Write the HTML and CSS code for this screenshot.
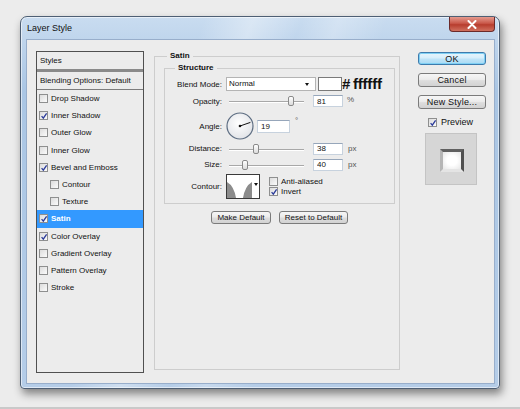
FILE: index.html
```html
<!DOCTYPE html>
<html lang="en">
<head>
    <meta charset="UTF-8">
    <title>Layer Style</title>
    <link rel="stylesheet" href="styles.css">
</head>
<body>

<div class="desk">
    <div class="window">
        <div class="titlebar">
            <span class="title">Layer Style</span>
            <button class="close">
                <svg width="10" height="9" viewBox="0 0 10 9"><path d="M1.5 1 L8.5 8 M8.5 1 L1.5 8" stroke="#fff" stroke-width="2" stroke-linecap="round"/></svg>
            </button>
        </div>

        <div class="client">
            <!-- effect list -->
            <div class="styles-list">
                <div class="list-head">Styles</div>
                <div class="list-blend">Blending Options: Default</div>
                <div class="item"><span class="cb"></span>Drop Shadow</div>
                <div class="item"><span class="cb on"><svg viewBox="0 0 8 8"><path d="M1.6 4.2 L3.3 6.2 L6.6 1.4"/></svg></span>Inner Shadow</div>
                <div class="item"><span class="cb"></span>Outer Glow</div>
                <div class="item"><span class="cb"></span>Inner Glow</div>
                <div class="item"><span class="cb on"><svg viewBox="0 0 8 8"><path d="M1.6 4.2 L3.3 6.2 L6.6 1.4"/></svg></span>Bevel and Emboss</div>
                <div class="item sub"><span class="cb"></span>Contour</div>
                <div class="item sub"><span class="cb"></span>Texture</div>
                <div class="item selected"><span class="cb on"><svg viewBox="0 0 8 8"><path d="M1.6 4.2 L3.3 6.2 L6.6 1.4"/></svg></span>Satin</div>
                <div class="item"><span class="cb on"><svg viewBox="0 0 8 8"><path d="M1.6 4.2 L3.3 6.2 L6.6 1.4"/></svg></span>Color Overlay</div>
                <div class="item"><span class="cb"></span>Gradient Overlay</div>
                <div class="item"><span class="cb"></span>Pattern Overlay</div>
                <div class="item"><span class="cb"></span>Stroke</div>
            </div>

            <!-- satin settings -->
            <fieldset class="group">
                <legend>Satin</legend>
                <fieldset class="group inner">
                    <legend>Structure</legend>

                    <div class="row row-blend">
                        <label>Blend Mode:</label>
                        <div class="select">Normal<span class="arrow"></span></div>
                        <div class="swatch"></div>
                        <span class="hex">#&thinsp;ffffff</span>
                    </div>

                    <div class="row row-opacity">
                        <label>Opacity:</label>
                        <div class="slider"><span class="thumb" style="left: 62px"></span></div>
                        <input class="num" type="text" value="81">
                        <span class="unit">%</span>
                    </div>

                    <div class="row row-angle">
                        <label>Angle:</label>
                        <svg class="dial" width="28" height="28" viewBox="0 0 28 28">
                            <defs>
                                <radialGradient id="dialFill" cx="0.45" cy="0.4" r="0.6">
                                    <stop offset="0" stop-color="#ffffff"/>
                                    <stop offset="1" stop-color="#e2e4e8"/>
                                </radialGradient>
                            </defs>
                            <circle cx="14" cy="14" r="13" fill="url(#dialFill)" stroke="#5d6d82" stroke-width="1.2"/>
                            <line x1="14" y1="14" x2="24.4" y2="10.4" stroke="#111" stroke-width="1"/>
                            <circle cx="14" cy="14" r="1.3" fill="#111"/>
                        </svg>
                        <input class="num wide" type="text" value="19">
                        <span class="unit deg">°</span>
                    </div>

                    <div class="row row-distance">
                        <label>Distance:</label>
                        <div class="slider"><span class="thumb" style="left: 27px"></span></div>
                        <input class="num" type="text" value="38">
                        <span class="unit">px</span>
                    </div>

                    <div class="row row-size">
                        <label>Size:</label>
                        <div class="slider"><span class="thumb" style="left: 16px"></span></div>
                        <input class="num" type="text" value="40">
                        <span class="unit">px</span>
                    </div>

                    <div class="row row-contour">
                        <label>Contour:</label>
                        <div class="contour">
                            <svg width="25" height="23" viewBox="0 0 25 23">
                                <rect width="25" height="23" fill="#8c8c8c"/>
                                <path d="M0 0 H25 V7 Q18 11 16 23 H9 Q7 11 0 7 Z" fill="#fff"/>
                            </svg>
                            <span class="contour-arrow"></span>
                        </div>
                        <div class="checks">
                            <div class="check"><span class="cb"></span>Anti-aliased</div>
                            <div class="check"><span class="cb on"><svg viewBox="0 0 8 8"><path d="M1.6 4.2 L3.3 6.2 L6.6 1.4"/></svg></span>Invert</div>
                        </div>
                    </div>
                </fieldset>

                <div class="defaults">
                    <button class="btn">Make Default</button>
                    <button class="btn">Reset to Default</button>
                </div>
            </fieldset>

            <!-- dialog buttons -->
            <div class="actions">
                <button class="btn big primary">OK</button>
                <button class="btn big">Cancel</button>
                <button class="btn big">New Style...</button>
                <div class="preview-check"><span class="cb on"><svg viewBox="0 0 8 8"><path d="M1.6 4.2 L3.3 6.2 L6.6 1.4"/></svg></span>Preview</div>
                <div class="preview">
                    <div class="preview-tile"></div>
                </div>
            </div>
        </div>
    </div>
</div>

</body>
</html>
```

FILE: styles.css
```css
body {
    margin: 0;
    background-color: #ececec;
    font-family: "Liberation Sans", Arial, sans-serif;
    font-size: 8px;
    color: #111;
    overflow: hidden;
}

.desk {
    height: 391px;
    padding: 16px 20px 0;
    border-bottom: 2px solid #c9c9c9;
}

/* window frame */
.window {
    width: 478px;
    height: 371px;
    border: 1px solid #4e5f74;
    border-radius: 7px 7px 4px 4px;
    background:
        linear-gradient(110deg, rgba(255,255,255,0) 30%, rgba(255,255,255,0.35) 38%, rgba(255,255,255,0) 46%, rgba(255,255,255,0.25) 52%, rgba(255,255,255,0) 60%),
        linear-gradient(#c9dcf0, #aac6e4 20%, #b5cde8);
    box-shadow: 2px 5px 8px rgba(0, 0, 0, 0.45), inset 0 0 0 1px rgba(255,255,255,0.55);
    display: flex;
    flex-direction: column;
}

.titlebar {
    height: 22px;
    display: flex;
    align-items: flex-start;
    padding-left: 6px;
}

.title {
    font-size: 9px;
    line-height: 22px;
    color: #111;
}

.close {
    margin-left: auto;
    margin-right: 4px;
    width: 46px;
    height: 15px;
    padding: 0;
    border: 1px solid #6b2a2a;
    border-top: none;
    border-radius: 0 0 4px 4px;
    background: linear-gradient(#e59a8e, #c9584a 45%, #b73d2e 55%, #d0705f);
    display: flex;
    align-items: center;
    justify-content: center;
}

.client {
    flex: 1;
    margin: 0 4px 4px 5px;
    border: 1px solid #98aecb;
    background-color: #ececec;
    display: flex;
    align-items: flex-start;
    padding: 11px 0 0 9px;
}

/* checkbox */
.cb {
    width: 7px;
    height: 7px;
    border: 1px solid #8e8f8f;
    background: linear-gradient(135deg, #dcdcdc, #fbfbfb);
    margin-right: 3px;
    flex: none;
    position: relative;
}

.cb svg {
    width: 8px;
    height: 8px;
    position: absolute;
    left: 0;
    top: 0;
}

.cb svg path {
    fill: none;
    stroke: #2b3b9a;
    stroke-width: 1.3;
}

/* effect list */
.styles-list {
    width: 106px;
    height: 320px;
    border: 1px solid #505050;
}

.list-head {
    height: 17px;
    line-height: 17px;
    padding-left: 3px;
    border-bottom: 3px solid #8a8a8a;
}

.list-blend {
    height: 17px;
    line-height: 17px;
    padding-left: 3px;
    border-bottom: 1px solid #7c7c7c;
}

.item {
    height: 17.2px;
    display: flex;
    align-items: center;
    padding-left: 2px;
}

.item.sub {
    padding-left: 13px;
}

.item.selected {
    background-color: #3399ff;
    color: #fff;
    font-weight: bold;
}

/* grouped settings */
.group {
    margin: 0;
    border: 1px solid #cdcdcd;
    padding: 0 4px 0 9px;
    min-width: 0;
}

.client > .group {
    width: 231px;
    height: 317px;
    margin-left: 10px;
}

.group legend {
    font-weight: bold;
    line-height: 10px;
    padding: 0 3px;
    margin-left: 3px;
}

.group.inner {
    margin-top: 2px;
    padding: 0 0 4px 0;
}

.group.inner legend {
    margin-left: 10px;
}

.row {
    display: flex;
    align-items: center;
}

.row label {
    width: 57px;
    text-align: right;
    margin-right: 4px;
    flex: none;
}

.row-blend { margin-top: 4px; height: 14px; }
.row-opacity { margin-top: 4px; height: 12px; }
.row-angle { margin-top: 5px; height: 28px; }
.row-distance { margin-top: 2px; height: 13px; }
.row-size { margin-top: 3px; height: 13px; }
.row-contour { margin-top: 3px; height: 25px; align-items: flex-start; }
.row-contour label { line-height: 25px; }

.select {
    width: 86px;
    height: 12px;
    line-height: 12px;
    padding-left: 2px;
    border: 1px solid #b4b4b4;
    background-color: #fff;
    position: relative;
}

.select .arrow,
.contour-arrow {
    position: absolute;
    right: 6px;
    top: 5px;
    border-left: 2.5px solid transparent;
    border-right: 2.5px solid transparent;
    border-top: 3px solid #111;
}

.swatch {
    width: 22px;
    height: 12px;
    margin-left: 2px;
    border: 1px solid #7a7a7a;
    background-color: #fff;
}

.hex {
    font-size: 15px;
    font-weight: bold;
    line-height: 14px;
    margin-left: 0;
    color: #111;
    letter-spacing: -0.2px;
    white-space: nowrap;
}

.slider {
    width: 83px;
    height: 12px;
    margin-right: 4px;
    position: relative;
}

.slider::before {
    content: "";
    position: absolute;
    left: 3px;
    right: 5px;
    top: 6px;
    height: 1px;
    background-color: #a8a8a8;
    box-shadow: 0 1px 0 #fff;
}

.thumb {
    position: absolute;
    top: 1px;
    width: 4px;
    height: 8px;
    border: 1px solid #8a8a8a;
    border-radius: 2px;
    background: linear-gradient(#ffffff, #dcdcdc);
}

.num {
    width: 25px;
    height: 10px;
    padding: 0 0 0 3px;
    border: 1px solid #c7d2de;
    border-top-color: #96a6ba;
    font-family: "Liberation Sans", Arial, sans-serif;
    font-size: 8px;
    color: #111;
    background-color: #fff;
}

.num.wide {
    width: 28px;
    height: 11px;
    margin-left: 3px;
}

.unit {
    margin-left: 5px;
    color: #555;
}

.unit.deg {
    align-self: flex-start;
    margin-top: 4px;
}

.row-opacity .unit {
    margin-left: 4px;
    align-self: flex-start;
}

.contour {
    width: 32px;
    height: 23px;
    border: 1px solid #3a3a3a;
    display: flex;
    position: relative;
    background-color: #fff;
}

.contour-arrow {
    top: 8px;
    right: 1px;
}

.checks {
    margin-left: 9px;
    padding-top: 2px;
}

.check {
    display: flex;
    align-items: center;
    height: 10.5px;
}

.defaults {
    display: flex;
    justify-content: center;
    gap: 8px;
    margin-top: 7px;
}

/* buttons */
.btn {
    height: 13px;
    padding: 0;
    border: 1px solid #7b7b7b;
    border-radius: 3px;
    background: linear-gradient(#f6f6f6, #ececec 45%, #dddddd 55%, #d2d2d2);
    font-family: "Liberation Sans", Arial, sans-serif;
    font-size: 8px;
    color: #111;
    white-space: nowrap;
}

.defaults .btn:first-child { width: 60px; }
.defaults .btn:last-child { width: 69px; }

.actions {
    width: 68px;
    margin-left: 18px;
    padding-top: 1px;
    display: flex;
    flex-direction: column;
}

.btn.big {
    width: 68px;
    height: 14px;
    font-size: 9px;
    margin-bottom: 8px;
    letter-spacing: 0.2px;
}

.btn.primary {
    height: 13px;
    border-color: #3d7bad;
    background: linear-gradient(#e8f5fc, #d6eefb 45%, #bfe4f8 55%, #a9daf4);
    box-shadow: inset 0 0 0 1px #7fd0f4;
}

.preview-check {
    display: flex;
    align-items: center;
    font-size: 9px;
    margin: -1px 0 0 10px;
    height: 12px;
}

.preview-check .cb {
    margin-right: 4px;
}

.preview {
    width: 50px;
    height: 50px;
    margin: 5px 0 0 7px;
    border: 1px solid #c4c4c4;
    background-color: #d6d6d6;
    display: flex;
    align-items: center;
    justify-content: center;
}

.preview-tile {
    width: 18px;
    height: 17px;
    border-top: 3px solid #606060;
    border-right: 3px solid #505050;
    border-left: 3px solid #b5b5b5;
    border-bottom: 3px solid #e4e4e4;
    background: radial-gradient(#ffffff 40%, #e6e6e6);
    margin: 2px 0 0 1px;
}
```
